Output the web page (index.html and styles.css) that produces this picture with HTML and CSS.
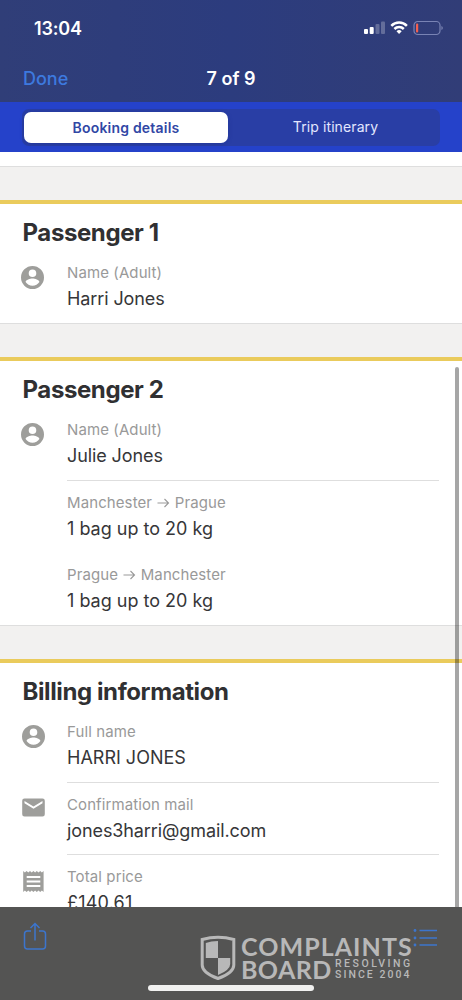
FILE: index.html
```html
<!DOCTYPE html>
<html lang="en">
<head>
<meta charset="utf-8">
<title>Booking details</title>
<link rel="stylesheet" href="styles.css">
</head>
<body>
<svg class="defs" width="0" height="0">
  <symbol id="person" viewBox="2 2 20 20"><path d="M12 2a10 10 0 1 0 0 20 10 10 0 0 0 0-20zm0 3a3.3 3.3 0 1 1 0 6.600 3.300 3.300 0 0 1 0-6.600zm0 14.200a7.200 7.200 0 0 1-6-3.220c.03-1.990 4-3.080 6-3.080s5.970 1.090 6 3.080a7.200 7.200 0 0 1-6 3.220z"/></symbol>
</svg>
<div class="screen">
  <header class="top">
    <div class="status">
      <span class="time">13:04</span>
      <svg class="indicators" width="80" height="16" viewBox="0 0 80 16">
        <g fill="#fff">
          <rect x="0" y="9" width="4" height="5" rx="1"/>
          <rect x="5.700" y="7" width="4" height="7" rx="1"/>
          <rect x="11.500" y="4" width="4" height="10" rx="1" opacity=".25"/>
          <rect x="17" y="1.500" width="4" height="12.500" rx="1" opacity=".25"/>
        </g>
        <g fill="none" stroke="#fff" stroke-width="2.500">
          <path d="M27.300 5.800a11 11 0 0 1 15.600 0"/>
          <path d="M30.400 9a6.800 6.800 0 0 1 9.400 0"/>
        </g>
        <path d="M32.500 11.200a3.800 3.800 0 0 1 5.200 0L35.100 14z" fill="#fff"/>
        <rect x="50" y="1.500" width="26" height="13" rx="3.700" fill="none" stroke="#7983b4" stroke-width="1.200"/>
        <rect x="52" y="3.500" width="2.200" height="9" rx="1" fill="#f4604f"/>
        <path d="M77.500 6v4c1.600-.5 1.600-3.500 0-4z" fill="#8992bc"/>
      </svg>
    </div>
    <div class="nav"><span class="done">Done</span><span class="count">7 of 9</span><span></span></div>
  </header>
  <div class="tabs"><div class="segment"><span class="tab active">Booking details</span><span class="tab">Trip itinerary</span></div></div>
  <main class="content">
    <div class="sliver"></div>
    <section class="card">
      <h2>Passenger 1</h2>
      <div class="row"><svg class="icon"><use href="#person"/></svg><div class="field"><span class="label">Name (Adult)</span><span class="value">Harri Jones</span></div></div>
    </section>
    <section class="card">
      <h2>Passenger 2</h2>
      <div class="row lined"><svg class="icon"><use href="#person"/></svg><div class="field"><span class="label">Name (Adult)</span><span class="value">Julie Jones</span></div></div>
      <div class="row"><i class="icon"></i><div class="field"><span class="label route">Manchester <svg class="arrow" viewBox="0 0 13 12"><path d="M.5 6h11M7.500 2l4 4-4 4"/></svg> Prague</span><span class="value bag">1 bag up to 20 kg</span></div></div>
      <div class="row"><i class="icon"></i><div class="field"><span class="label route">Prague <svg class="arrow" viewBox="0 0 13 12"><path d="M.5 6h11M7.500 2l4 4-4 4"/></svg> Manchester</span><span class="value bag">1 bag up to 20 kg</span></div></div>
    </section>
    <section class="card billing">
      <h2>Billing information</h2>
      <div class="row lined"><svg class="icon"><use href="#person"/></svg><div class="field"><span class="label">Full name</span><span class="value caps">HARRI JONES</span></div></div>
      <div class="row lined"><svg class="icon mail" viewBox="0 0 23 23"><path fill-rule="evenodd" d="M2.500 2.500h18a2.300 2.300 0 0 1 2.300 2.300v13.400a2.300 2.300 0 0 1-2.300 2.300h-18a2.300 2.300 0 0 1-2.300-2.300V4.800a2.300 2.300 0 0 1 2.300-2.300zM2.500 5v2.200l9 5.600 9-5.600V5l-9 5.600z"/></svg><div class="field"><span class="label">Confirmation mail</span><span class="value">jones3harri@gmail.com</span></div></div>
      <div class="row"><svg class="icon" viewBox="0 0 23 23"><path fill-rule="evenodd" d="M1.200 1l1.700 1.500L4.600 1l1.700 1.500L8 1l1.700 1.500L11.400 1l1.700 1.500L14.800 1l1.700 1.500L18.200 1l1.700 1.500L21.600 1v21l-1.700-1.500-1.700 1.500-1.700-1.500-1.700 1.500-1.700-1.500-1.700 1.500-1.700-1.500L8 22l-1.700-1.500L4.600 22l-1.700-1.500L1.200 22zM4.700 6v1.900h13.600V6zm0 4.500v1.900h13.600v-1.900zm0 4.500v1.900h13.600V15z"/></svg><div class="field"><span class="label">Total price</span><span class="value price">£140.61</span></div></div>
    </section>
    <div class="scrollbar"></div>
  </main>
  <footer class="toolbar">
    <svg class="share" width="24" height="29" viewBox="0 0 24 29"><path d="M8 9H4.500A3 3 0 0 0 1.500 12v12a3 3 0 0 0 3 3h15a3 3 0 0 0 3-3V12a3 3 0 0 0-3-3H16M12 18.500V2M7.500 6L12 1.500 16.500 6"/></svg>
    <svg class="list" width="25" height="20" viewBox="0 0 25 20"><path d="M6.500 2.500H24M6.500 10H24M6.500 17H24"/><g><circle cx="2" cy="2.500" r="1.400"/><circle cx="2" cy="10" r="1.400"/><circle cx="2" cy="17" r="1.400"/></g></svg>
    <div class="watermark">
      <svg width="36" height="46" viewBox="0 0 36 46"><path d="M2.200 4.500Q18 .2 33.800 4.500V30q0 8-15.800 13.500Q2.200 38 2.200 30z" fill="none" stroke="#b8b8b8" stroke-width="3"/><path d="M5.800 8Q11 6 18 6v17H5.800zM18 23h12.200v6q0 6-12.200 11z" fill="#b8b8b8"/></svg>
      <div class="brand"><span class="brand-top">COMPLAINTS</span><div class="brand-bottom"><span class="board">BOARD</span><span class="tagline"><span class="resolving">RESOLVING</span><span class="since">SINCE 2004</span></span></div></div>
    </div>
    <div class="home"></div>
  </footer>
</div>
</body>
</html>
```
FILE: styles.css
```css
* { box-sizing: border-box; }
body { margin: 0; font-family: Inter, "Liberation Sans", sans-serif; }
.defs { position: absolute; }
.screen { width: 462px; height: 1000px; overflow: hidden; display: flex; flex-direction: column; background: #fff; }
.top { height: 102px; flex: none; background: linear-gradient(90deg, #303e78, #2c3c7e 50%, #313d77); color: #fff; }
.status { height: 56px; padding: 0 18px 0 34px; display: flex; justify-content: space-between; align-items: center; }
.time { font-size: 18px; font-weight: 600; letter-spacing: -.2px; }
.indicators { margin-top: -1px; }
.nav { height: 46px; padding: 0 23px; display: grid; grid-template-columns: 1fr auto 1fr; align-items: center; font-size: 18px; line-height: 46px; }
.done { color: #3d79df; font-weight: 500; }
.count { font-weight: 600; }
.tabs { height: 50px; flex: none; padding: 7px 22px; background: #2542ca; }
.segment { height: 37px; border-radius: 7px; background: #293ea5; display: grid; grid-template-columns: 208px 1fr; padding: 2px; }
.tab { display: flex; align-items: center; justify-content: center; color: #e3e7ff; font-size: 14px; line-height: 32px; height: 32px; letter-spacing: .1px; }
.tab.active { width: 204px; margin-top: 1px; border-radius: 7px; background: #fff; color: #3147a5; font-weight: 600; box-shadow: 0 1px 4px #172b8666; height: 31px; letter-spacing: .2px; }
.tab:not(.active) { padding-left: 1px; }
.content { height: 755px; flex: none; overflow: hidden; position: relative; background: #f2f1f0; display: flex; flex-direction: column; }
.sliver { height: 14.500px; flex: none; background: #fff; border-bottom: 1px solid #dedede; margin-bottom: 33.500px; }
.card { flex: none; background: #fff; border-top: 4px solid #eacb5c; border-bottom: 1px solid #dedede; margin-bottom: 33px; }
.card h2 { margin: 0; height: 46.500px; padding: 14px 22.500px 0; font-size: 24px; line-height: 30px; font-weight: 700; letter-spacing: -.4px; color: #303032; }
.row { height: 72.500px; display: flex; padding-left: 21px; }
.icon { width: 23px; height: 23px; margin: 15.500px 23px 0 0; fill: #9e9e9b; flex: none; }
.billing .icon { margin-left: 1px; margin-right: 22px; }
.billing .mail { margin-top: 13.500px; }
.field { width: 372px; padding-top: 12.600px; display: flex; flex-direction: column; gap: 3px; }
.lined .field { border-bottom: 1px solid #dedede; margin-bottom: -.5px; }
.label { font-size: 15px; line-height: 20px; color: #999; letter-spacing: .1px; white-space: nowrap; }
.value { font-size: 18px; line-height: 26px; color: #363638; white-space: nowrap; letter-spacing: -.1px; }
.bag, .caps { letter-spacing: 0; }
.price { letter-spacing: .2px; }
.arrow { width: 13px; height: 12px; vertical-align: -1px; margin: 0 .5px; fill: none; stroke: #999; stroke-width: 1.100; }
.scrollbar { position: absolute; right: 3px; top: 215px; width: 4px; height: 560px; border-radius: 2px; background: #00000059; }
.toolbar { height: 93px; flex: none; position: relative; background: #545453; display: flex; justify-content: space-between; padding: 15px 24px 0 23px; }
.share { fill: none; stroke: #3c75cd; stroke-width: 1.500; }
.list { margin-top: 6px; fill: #3c75cd; stroke: #3c75cd; stroke-width: 1.500; }
.list g { stroke: none; }
.watermark { position: absolute; left: 200px; top: 28px; display: flex; gap: 5px; color: #b8b8b8; font-family: Lato, sans-serif; }
.brand { display: flex; flex-direction: column; }
.brand-top, .board { font-size: 25px; font-weight: 700; line-height: 23px; white-space: nowrap; }
.brand-top { letter-spacing: 1.050px; }
.board { width: 90px; letter-spacing: .4px; }
.brand-bottom { display: flex; gap: 4px; }
.tagline { display: flex; flex-direction: column; font-family: Roboto, sans-serif; font-size: 10.500px; line-height: 10.500px; font-weight: 500; white-space: nowrap; padding-top: 1px; }
.resolving { letter-spacing: 2.500px; }
.since { letter-spacing: 2.050px; }
.home { position: absolute; left: 148px; bottom: 9px; width: 166px; height: 6px; border-radius: 3px; background: #f1f1f0; }
```
